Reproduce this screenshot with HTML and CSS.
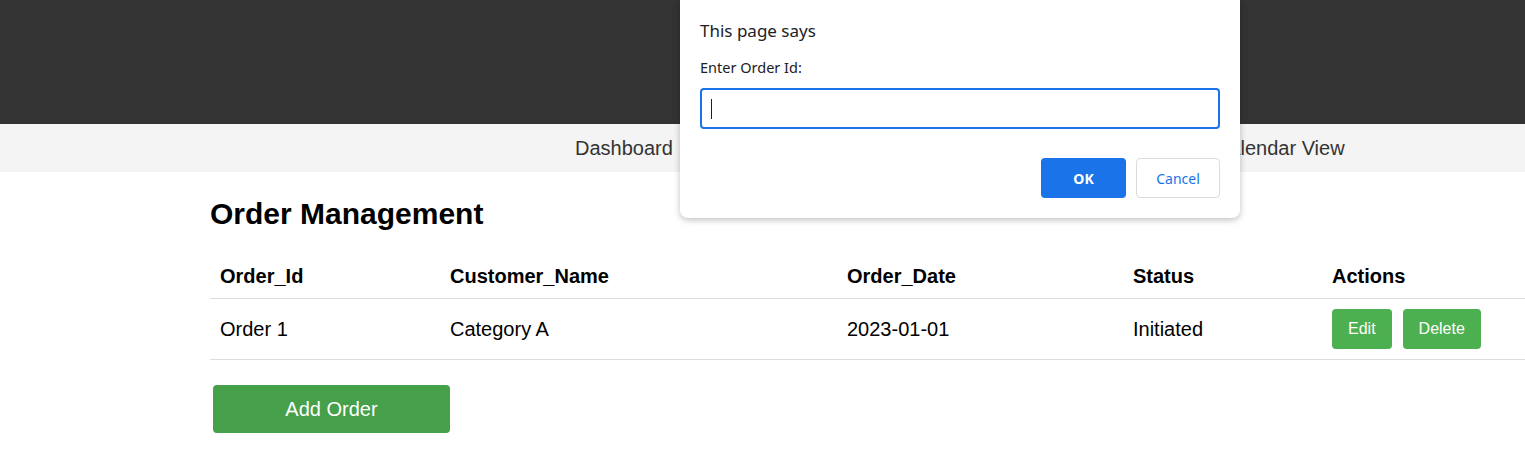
FILE: index.html
```html
<!DOCTYPE html>
<html>
<head>
<meta charset="utf-8">
<title>Order Management</title>
<link rel="stylesheet" href="styles.css">
</head>
<body>
<header class="topbar"></header>
<nav class="nav">
  <a class="nav-link nav-first" href="#">Dashboard</a>
  <a class="nav-link" href="#">Orders</a>
  <a class="nav-link" href="#">Products</a>
  <a class="nav-link nav-last" href="#">Calendar View</a>
</nav>
<main class="main">
  <h2 class="title">Order Management</h2>
  <table class="orders">
    <colgroup>
      <col class="c1"><col class="c2"><col class="c3"><col class="c4"><col class="c5">
    </colgroup>
    <thead>
      <tr><th>Order_Id</th><th>Customer_Name</th><th>Order_Date</th><th>Status</th><th>Actions</th></tr>
    </thead>
    <tbody>
      <tr>
        <td>Order 1</td><td>Category A</td><td>2023-01-01</td><td>Initiated</td>
        <td><div class="actions"><button class="btn">Edit</button><button class="btn">Delete</button></div></td>
      </tr>
    </tbody>
  </table>
  <button class="add-btn">Add Order</button>
</main>
<div class="dialog">
  <div class="dlg-title">This page says</div>
  <div class="dlg-msg">Enter Order Id:</div>
  <div class="dlg-input"><span class="caret"></span></div>
  <div class="dlg-buttons">
    <button class="dlg-ok">OK</button>
    <button class="dlg-cancel">Cancel</button>
  </div>
</div>
</body>
</html>
```
FILE: styles.css
```css
html, body { margin: 0; padding: 0; }
body {
  font-family: "Liberation Sans", Arial, sans-serif;
  font-size: 20px;
  color: #000;
  background: #fff;
  width: 1525px;
  overflow: hidden;
}
.topbar { height: 124px; background: #333; }
.nav {
  height: 48px;
  background: #f4f4f4;
  display: flex;
  align-items: center;
  padding-left: 575px;
}
.nav-link { color: #333; text-decoration: none; font-size: 20px; }
.nav-link + .nav-link { margin-left: 110px; }
.nav-link.nav-last { margin-left: 182px; }
.main { padding-left: 210px; }
.title {
  font-size: 30px;
  font-weight: bold;
  margin: 24px 0 25px 0;
  line-height: 35px;
}
.orders { width: 100%; border-collapse: collapse; }
.c1 { width: 230px; } .c2 { width: 397px; } .c3 { width: 286px; } .c4 { width: 199px; }
.orders th, .orders td {
  text-align: left;
  padding: 10px;
  border-bottom: 1px solid #ddd;
  line-height: 23px;
}
.orders th { font-weight: bold; padding-top: 9px; padding-bottom: 10px; }
.orders td { height: 40px; padding-top: 10px; padding-bottom: 10px; }
.actions { display: flex; gap: 11px; }
.btn {
  font-family: "Liberation Sans", Arial, sans-serif;
  font-size: 16px;
  height: 40px;
  padding: 0 16px;
  border: none;
  border-radius: 4px;
  background: #4caf50;
  color: #fff;
}
.add-btn {
  display: block;
  margin: 25px 0 0 3px;
  width: 237px;
  height: 48px;
  border: none;
  border-radius: 4px;
  background: #45a049;
  color: #fff;
  font-family: "Liberation Sans", Arial, sans-serif;
  font-size: 20px;
}
.dialog {
  position: absolute;
  top: 0;
  left: 680px;
  width: 560px;
  height: 218px;
  box-sizing: border-box;
  padding: 0 20px;
  background: #fff;
  border-radius: 0 0 8px 8px;
  box-shadow: 0 2px 6px rgba(0,0,0,0.25);
  font-family: "Noto Sans", "Open Sans", sans-serif;
  color: #202124;
}
.dlg-title { font-size: 17px; line-height: 22px; padding-top: 20px; }
.dlg-msg { font-size: 14.5px; line-height: 20px; margin-top: 15px; }
.dlg-input {
  margin-top: 11px;
  height: 41px;
  box-sizing: border-box;
  border: 2px solid #1a73e8;
  border-radius: 4px;
  display: flex;
  align-items: center;
  padding-left: 9px;
}
.caret { width: 1px; height: 20px; background: #202124; }
.dlg-buttons {
  display: flex;
  justify-content: flex-end;
  gap: 10px;
  margin-top: 29px;
}
.dlg-ok, .dlg-cancel {
  width: 85px;
  height: 40px;
  border-radius: 4px;
  font-family: "Noto Sans", "Open Sans", sans-serif;
  font-size: 14px;
}
.dlg-ok { background: #1a73e8; color: #fff; border: none; font-weight: bold; }
.dlg-cancel { background: #fff; color: #1a73e8; border: 1px solid #dadce0; width: 84px; }
```
